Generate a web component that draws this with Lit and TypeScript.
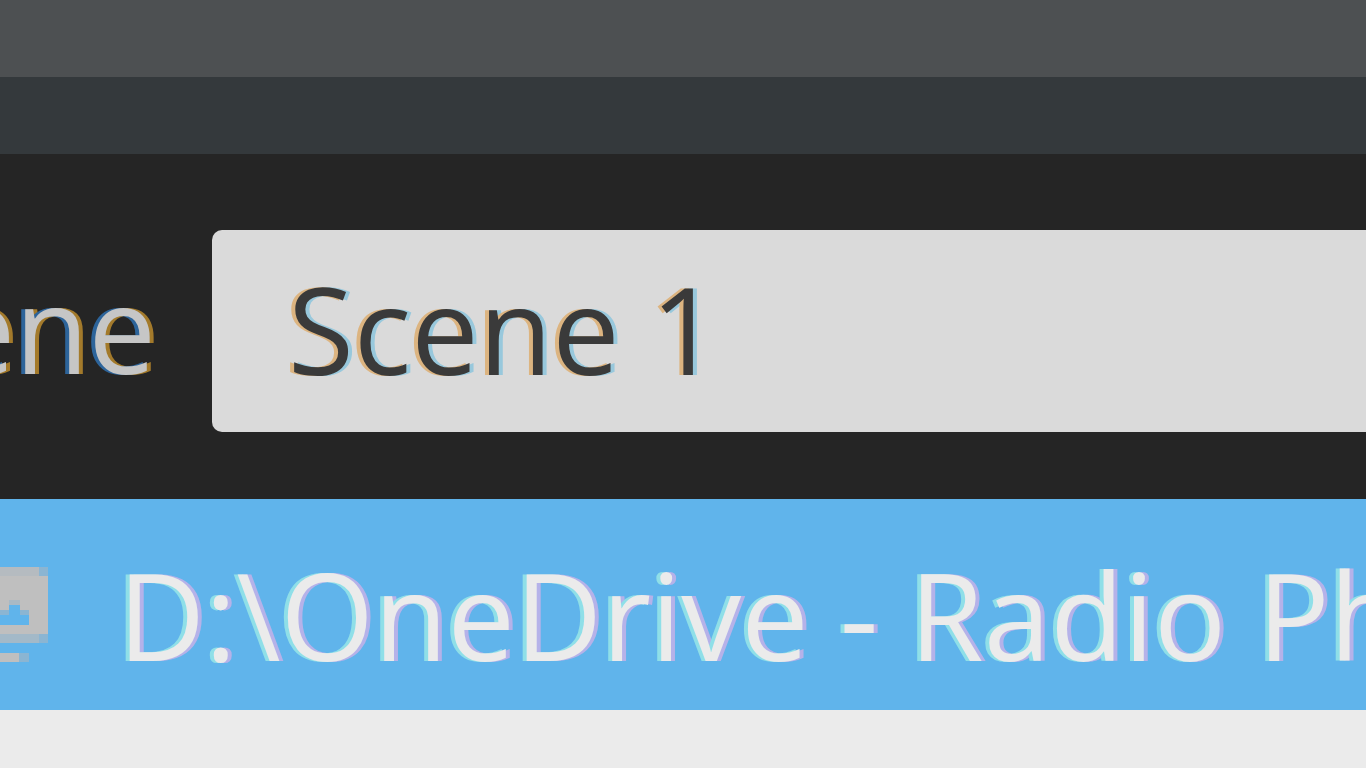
import { LitElement, html, css } from "lit";
import { customElement, property } from "lit/decorators.js";

@customElement("app-root")
export class AppRoot extends LitElement {
  static styles = css`
    :host {
      display: flex;
      flex-direction: column;
      min-height: 100vh;
      overflow: hidden;
      background: #ebebeb;
      font-family: "Open Sans", "Noto Sans", sans-serif;
      font-size: 120px;
      line-height: 160px;
    }
    .titlebar {
      height: 77px;
      background: #4d5052;
    }
    .toolbar {
      height: 77px;
      background: #34393c;
    }
    .scene {
      display: flex;
      align-items: center;
      padding: 76px 0 67px;
      background: #252525;
    }
    .scene-label {
      flex: none;
      display: flex;
      justify-content: flex-end;
      box-sizing: border-box;
      width: 212px;
      padding: 0 56px 6px 0;
      overflow: hidden;
      color: #c6c6c6;
      text-shadow: -4px 0 #2d649a, 4px 0 #a37a2b;
    }
    .scene-input {
      flex: 1;
      min-width: 0;
      box-sizing: border-box;
      height: 202px;
      padding: 0 76px 6px;
      border: 0;
      border-radius: 10px 0 0 10px;
      outline: 0;
      background: #dadada;
      color: #3a3a3a;
      font: inherit;
      text-shadow: -4px 0 #dcb480, 4px 0 #98c8dc;
    }
    .source {
      display: flex;
      align-items: center;
      gap: 70px;
      width: 100%;
      height: 211px;
      padding: 20px 0 0;
      border: 0;
      overflow: hidden;
      background: #60b4eb;
      color: #ebebeb;
      font: inherit;
      text-align: left;
      white-space: nowrap;
      text-shadow: -4px 0 #8fdfe8, 4px 0 #b5b2e9;
    }
    .source-icon {
      flex: none;
      width: 48px;
      height: 95px;
    }
  `;

  @property() scene = "Scene 1";
  @property() path = "D:\\OneDrive - Radio Ph";

  render() {
    return html`
      <div class="titlebar"></div>
      <div class="toolbar"></div>
      <div class="scene">
        <label class="scene-label" for="scene">Scene</label>
        <input class="scene-input" id="scene" type="text" .value=${this.scene} />
      </div>
      <button class="source" type="button">
        <svg class="source-icon" viewBox="0 0 48 95" shape-rendering="crispEdges" aria-hidden="true">
          <path fill="#b5bbc0" d="M0 0h39v9H0z" />
          <path fill="#8bb5d2" d="M39 0h9v9h-9zM39 67h9v9h-9zM19 86h10v9H19z" />
          <path fill="#bfbfbf" d="M0 9h48v58H0v-9h29V48h-9V38H9v10H0zM0 86h19v9H0z" />
          <path fill="#a3b9c8" d="M0 67h39v9H0z" />
          <path fill="#8bb5d2" d="M0 43h9v5H0zM20 43h9v5h-9z" />
          <path fill="#a8b9c5" d="M9 33h11v5H9z" />
        </svg>
        <span>${this.path}</span>
      </button>
    `;
  }
}
